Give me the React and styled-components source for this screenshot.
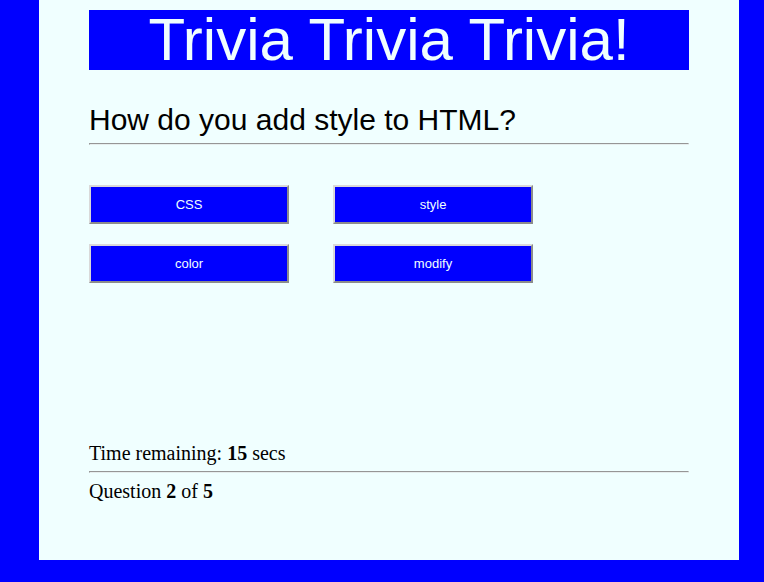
import React from "react";
import styled, { createGlobalStyle } from "styled-components";

const GlobalStyle = createGlobalStyle`
  body { margin: 0; background: #0000ff; }
`;

const Page = styled.div`
  padding: 0 25px 22px 39px;
`;

const Card = styled.main`
  box-sizing: border-box;
  max-width: 700px;
  margin: 0 auto;
  padding: 10px 50px 57px;
  background: #f0ffff;
  color: #000;
  font-family: "Liberation Serif", "Times New Roman", serif;
  font-size: 20px;
`;

const Title = styled.h1`
  margin: 0;
  background: #0000ff;
  color: #f0ffff;
  font: 400 60px/60px "Liberation Sans", Arial, sans-serif;
  text-align: center;
`;

const Question = styled.h2`
  margin: 32px 0 0;
  font: 400 30px/35px "Liberation Sans", Arial, sans-serif;
`;

const Rule = styled.hr`
  margin: 6px 0;
  border: 1px solid;
  border-color: #969696 #e6eeee #e6eeee #969696;
`;

const Answers = styled.div`
  display: grid;
  grid-template-columns: repeat(auto-fill, 200px);
  gap: 20px 44px;
  min-height: 256px;
  padding-top: 34px;
  align-content: start;
`;

const AnswerButton = styled.button`
  height: 39px;
  padding: 0;
  border: 2px solid;
  border-color: #d9d9d9 #8c8c8c #8c8c8c #d9d9d9;
  border-radius: 0;
  background: #0000ff;
  color: #f0ffff;
  font: 400 13px "Liberation Sans", Arial, sans-serif;
  cursor: pointer;
`;

const Status = styled.p`
  margin: 0;
  line-height: 24px;
`;

const answers = ["CSS", "style", "color", "modify"];

export default function App() {
  return (
    <Page>
      <GlobalStyle />
      <Card>
        <Title>Trivia Trivia Trivia!</Title>
        <Question>How do you add style to HTML?</Question>
        <Rule />
        <Answers>
          {answers.map((answer) => (
            <AnswerButton key={answer} type="button">{answer}</AnswerButton>
          ))}
        </Answers>
        <Status>Time remaining: <b>15</b> secs</Status>
        <Rule />
        <Status>Question <b>2</b> of <b>5</b></Status>
      </Card>
    </Page>
  );
}
